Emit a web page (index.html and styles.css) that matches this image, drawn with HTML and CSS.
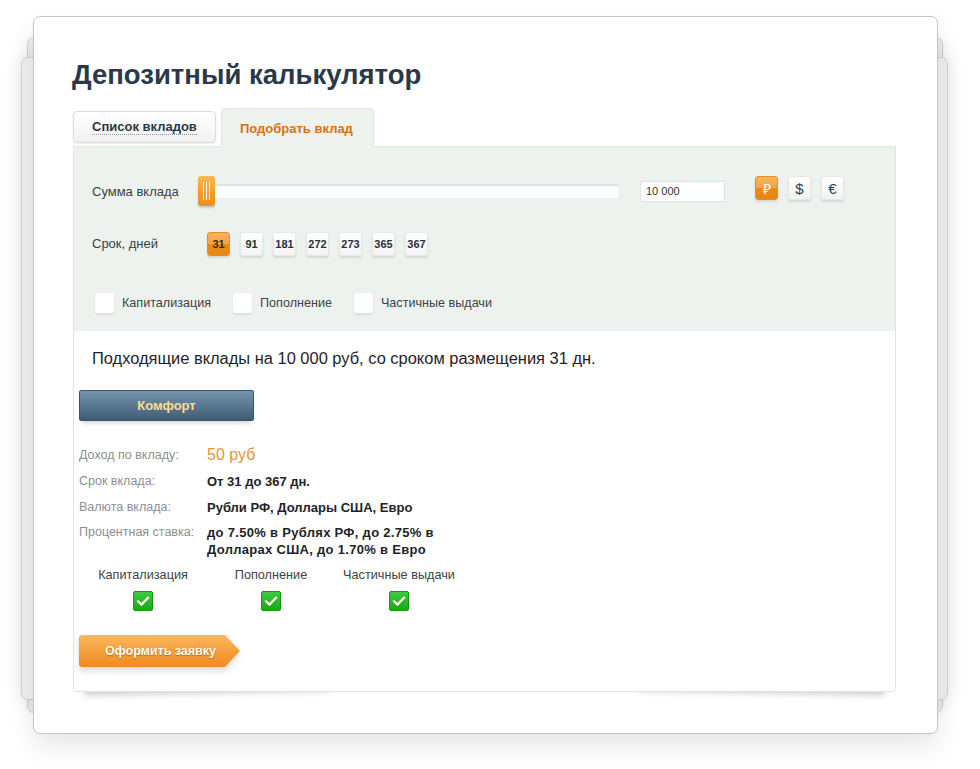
FILE: index.html
```html
<!DOCTYPE html>
<html lang="ru">
<head>
<meta charset="utf-8">
<title>Депозитный калькулятор</title>
<link rel="stylesheet" href="styles.css">
</head>
<body>
<div class="stage">
  <div class="card">
    <h1 class="title">Депозитный калькулятор</h1>
    <div class="calc">
      <div class="tabs">
        <div class="tab"><span class="tab-link">Список вкладов</span></div>
        <div class="tab tab-active">Подобрать вклад</div>
      </div>
      <div class="panel">
        <div class="filters">
          <div class="row row-sum">
            <div class="row-label label-sum">Сумма вклада</div>
            <div class="slider">
              <div class="track"></div>
              <div class="handle"><i></i><i></i><i></i></div>
            </div>
            <div class="amount">10 000</div>
            <div class="currencies">
              <div class="btn btn-on">₽</div>
              <div class="btn btn-cur">$</div>
              <div class="btn btn-cur">€</div>
            </div>
          </div>
          <div class="row row-days">
            <div class="row-label label-days">Срок, дней</div>
            <div class="days">
              <div class="btn btn-on">31</div>
              <div class="btn">91</div>
              <div class="btn">181</div>
              <div class="btn">272</div>
              <div class="btn">273</div>
              <div class="btn">365</div>
              <div class="btn">367</div>
            </div>
          </div>
          <div class="row row-opts">
            <div class="opt"><span class="box"></span>Капитализация</div>
            <div class="opt"><span class="box"></span>Пополнение</div>
            <div class="opt"><span class="box"></span>Частичные выдачи</div>
          </div>
        </div>
        <div class="results">
          <p class="headline">Подходящие вклады на 10 000 руб, со сроком размещения 31 дн.</p>
          <div class="deposit-btn">Комфорт</div>
          <div class="details">
            <div class="drow"><span class="dlabel">Доход по вкладу:</span><span class="income">50 руб</span></div>
            <div class="drow"><span class="dlabel">Срок вклада:</span><span class="dval">От 31 до 367 дн.</span></div>
            <div class="drow"><span class="dlabel">Валюта вклада:</span><span class="dval">Рубли РФ, Доллары США, Евро</span></div>
            <div class="drow drow-multi"><span class="dlabel">Процентная ставка:</span><span class="dval dval-wide">до 7.50% в Рублях РФ, до 2.75% в<br>Долларах США, до 1.70% в Евро</span></div>
          </div>
          <div class="features">
            <div class="feat"><div class="feat-name">Капитализация</div><span class="check"><svg viewBox="0 0 20 20" width="20" height="20"><path d="M5 10.2 L8.6 13.6 L15.2 6.6" fill="none" stroke="#fff" stroke-width="2.2" stroke-linecap="round" stroke-linejoin="round"/></svg></span></div>
            <div class="feat"><div class="feat-name">Пополнение</div><span class="check"><svg viewBox="0 0 20 20" width="20" height="20"><path d="M5 10.2 L8.6 13.6 L15.2 6.6" fill="none" stroke="#fff" stroke-width="2.2" stroke-linecap="round" stroke-linejoin="round"/></svg></span></div>
            <div class="feat"><div class="feat-name">Частичные выдачи</div><span class="check"><svg viewBox="0 0 20 20" width="20" height="20"><path d="M5 10.2 L8.6 13.6 L15.2 6.6" fill="none" stroke="#fff" stroke-width="2.2" stroke-linecap="round" stroke-linejoin="round"/></svg></span></div>
          </div>
          <div class="order-wrap"><div class="order">Оформить заявку</div></div>
        </div>
      </div>
    </div>
  </div>
</div>
</body>
</html>
```

FILE: styles.css
```css
* { box-sizing: border-box; }
html { background: #fff; }
html, body { margin: 0; padding: 0; }
body { font-family: "Liberation Sans", Arial, sans-serif; color: #333; }

.stage { padding: 16px 0 0 33px; width: 980px; height: 769px; }

.card {
  position: relative;
  width: 905px;
  height: 718px;
  background: #fff;
  border: 1px solid #c4c4c4;
  border-radius: 7px;
  padding: 41px 0 0 39px;
  box-shadow: 0 12px 26px rgba(0,0,0,0.10);
}
.card::before,
.card::after {
  content: "";
  position: absolute;
  z-index: -1;
  border: 1px solid #d2d2d2;
  border-radius: 7px;
  background: linear-gradient(90deg, #efefef, #fbfbfb 6%, #fbfbfb 94%, #efefef);
}
.card::before { left: -7px; right: -6px; top: 20px; bottom: 20px; box-shadow: 0 0 10px rgba(0,0,0,0.05); }
.card::after { left: -13px; right: -11px; top: 40px; bottom: 33px; box-shadow: 0 0 20px rgba(0,0,0,0.10); }

.title {
  margin: 0 0 0 -1px;
  font-size: 27.5px;
  line-height: 34px;
  font-weight: bold;
  color: #2b3847;
}

.calc { position: relative; z-index: 0; }

.tabs {
  display: flex;
  align-items: flex-end;
  gap: 5px;
  margin-top: 16px;
  position: relative;
  z-index: 1;
}
.tab {
  height: 32px;
  padding: 0 18px;
  margin-bottom: 3px;
  display: flex;
  align-items: center;
  font-size: 13px;
  font-weight: bold;
  color: #2b3847;
  background: linear-gradient(#ffffff, #f1f1f1);
  border: 1px solid #dcdcdc;
  border-radius: 4px;
  box-shadow: 0 1px 2px rgba(0,0,0,0.08);
  width: 143px;
}
.tab-link { border-bottom: 1px dotted #8a93a0; line-height: 14px; }
.tab-active {
  height: 39px;
  width: 153px;
  margin-bottom: -1px;
  color: #d9700f;
  background: #eef2ee;
  border: 1px solid #e2e6e2;
  border-bottom: none;
  border-radius: 4px 4px 0 0;
  box-shadow: none;
}

.panel {
  position: relative;
  width: 823px;
  border: 1px solid #e1e4e1;
  border-radius: 0 0 4px 4px;
  background: #fff;
}
.panel::before,
.panel::after {
  content: "";
  position: absolute;
  z-index: -1;
  bottom: 5px;
  width: 30%;
  height: 14px;
  box-shadow: 0 7px 7px rgba(0,0,0,0.20);
}
.panel::before { left: 10px; transform: rotate(-1deg); }
.panel::after { right: 10px; transform: rotate(1deg); }

.filters {
  background: #eef2ee;
  padding: 28px 0 16px 18px;
}
.row { display: flex; align-items: center; }
.row-sum { height: 32px; }
.row-days { height: 25px; margin-top: 24px; }
.row-opts { height: 24px; margin-top: 35px; }

.row-label { font-size: 13px; color: #3a3f44; }
.label-sum { width: 106px; }
.label-days { width: 115px; }

.slider {
  position: relative;
  width: 420px;
  height: 32px;
  display: flex;
  align-items: center;
}
.track {
  flex: 1;
  margin-left: 8px;
  height: 14px;
  background: #fff;
  border-top: 2px solid #dfe4e6;
}
.handle {
  position: absolute;
  left: 0;
  top: 1px;
  width: 17px;
  height: 30px;
  border-radius: 3px;
  background: linear-gradient(#fbb556, #f29a2a 60%, #ee8f1e);
  box-shadow: 0 2px 2px rgba(0,0,0,0.15);
  display: flex;
  justify-content: center;
  gap: 2px;
  padding-top: 6px;
}
.handle i {
  display: block;
  width: 1px;
  height: 18px;
  background: #fff;
}

.amount {
  margin-left: 22px;
  width: 85px;
  height: 21px;
  background: #fff;
  border: 1px solid #dde3e5;
  font-size: 11px;
  line-height: 19px;
  padding-left: 5px;
  color: #333;
}

.currencies { display: flex; gap: 10px; margin-left: 30px; margin-top: -6px; }
.days { display: flex; gap: 10px; }

.btn {
  width: 23px;
  height: 24px;
  border-radius: 3px;
  background: linear-gradient(#ffffff, #f3f3f3);
  border: 1px solid #e6e8e6;
  box-shadow: 0 2px 2px rgba(0,0,0,0.10);
  display: flex;
  align-items: center;
  justify-content: center;
  font-size: 11px;
  font-weight: bold;
  color: #2b3038;
}
.btn-cur { font-size: 15px; font-weight: normal; color: #2f3b48; }
.btn-on {
  background: linear-gradient(#f9b35b, #f5a443 50%, #eb8a18 50%, #e98714);
  border-color: #e58e2a;
  color: #fff;
}
.row-days .btn-on { color: #3a2a10; }
.currencies .btn-on { font-size: 14px; font-weight: normal; }

.opt {
  display: flex;
  align-items: center;
  font-size: 12.6px;
  color: #3d4247;
  margin-right: 22px;
}
.box {
  display: block;
  width: 19px;
  height: 20px;
  margin: 0 8px 0 3px;
  border-radius: 3px;
  background: #fff;
  box-shadow: 0 2px 2px rgba(0,0,0,0.08);
}
.opt + .opt .box { margin-left: 0; }

.results { padding: 17px 0 24px 5px; }
.headline {
  margin: 0 0 0 13px;
  font-size: 16.45px;
  line-height: 20px;
  color: #1f2328;
}
.deposit-btn {
  margin-top: 22px;
  width: 175px;
  height: 31px;
  border: 1px solid #3c5468;
  border-radius: 2px;
  background: linear-gradient(#7193ab, #5a7a92 50%, #3f5b71);
  color: #fddc90;
  font-size: 13px;
  font-weight: bold;
  display: flex;
  align-items: center;
  justify-content: center;
  box-shadow: 0 5px 5px -3px rgba(0,0,0,0.18);
}

.details { margin-top: 21px; }
.drow { display: flex; height: 26px; align-items: center; }
.dlabel { width: 128px; font-size: 12.5px; color: #8a8f94; }
.dval { font-size: 13px; font-weight: bold; color: #1f2328; }
.dval-wide { letter-spacing: 0.3px; }
.income { font-size: 16px; color: #e8923c; }
.drow-multi { height: auto; align-items: flex-start; padding-top: 4px; line-height: 17px; }

.features { display: flex; margin-top: 9px; }
.feat {
  width: 128px;
  display: flex;
  flex-direction: column;
  align-items: center;
}
.feat-name { font-size: 12.7px; line-height: 16px; color: #3d4247; }
.check {
  margin-top: 8px;
  width: 20px;
  height: 20px;
  border-radius: 2px;
  background: linear-gradient(#3fca3f, #17a817);
  border: 1px solid #129a12;
  display: flex;
  align-items: center;
  justify-content: center;
}
.check svg { display: block; margin: -1px; }

.order-wrap {
  margin-top: 24px;
  width: 161px;
  filter: drop-shadow(0 4px 3px rgba(0,0,0,0.14));
}
.order {
  height: 32px;
  width: 161px;
  background: linear-gradient(#fbb85e, #f5a03c 50%, #ee8b1f);
  clip-path: polygon(0 0, 146px 0, 161px 16px, 146px 32px, 0 32px);
  border-radius: 3px 0 0 3px;
  color: #fff;
  font-size: 12.5px;
  font-weight: bold;
  text-shadow: 0 1px 1px rgba(120,60,0,0.5);
  display: flex;
  align-items: center;
  padding-left: 26px;
}
```
